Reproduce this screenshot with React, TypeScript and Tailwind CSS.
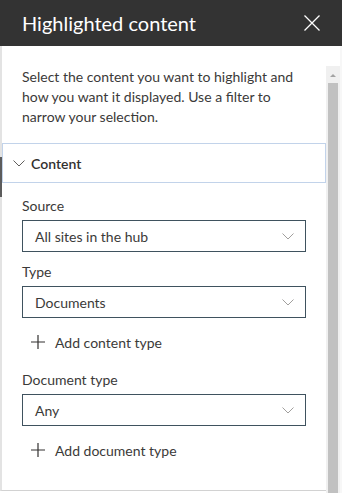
import React from "react";

const font = { fontFamily: '"Segoe UI", Lato, "Noto Sans", sans-serif' };

function Chevron({ className }: { className?: string }) {
  return (
    <svg viewBox="0 0 12 7" className={className} fill="none" stroke="currentColor" strokeWidth="1">
      <path d="M0.5 0.5 L6 6 L11.5 0.5" />
    </svg>
  );
}

function Plus() {
  return (
    <svg viewBox="0 0 14 14" className="w-[14px] h-[14px] text-[#323130]" fill="none" stroke="currentColor" strokeWidth="1.2">
      <path d="M7 0 V14 M0 7 H14" />
    </svg>
  );
}

function Dropdown({ value }: { value: string }) {
  return (
    <div className="h-[32px] border border-[#3f525e] flex items-center justify-between pl-[12px] pr-[11px]">
      <span className="text-[14px] text-[#3b3a39]">{value}</span>
      <Chevron className="w-[12px] h-[7px] text-[#a19f9d]" />
    </div>
  );
}

function AddLink({ label }: { label: string }) {
  return (
    <div className="h-[40px] flex items-center gap-[10px] pl-[9px] mt-[4px]">
      <Plus />
      <span className="text-[14px] text-[#3b3a39]">{label}</span>
    </div>
  );
}

export default function App() {
  return (
    <div className="w-[342px] h-[493px] bg-white overflow-hidden flex flex-col" style={font}>
      {/* Header */}
      <div className="h-[46px] bg-[#333333] flex items-center justify-between pl-[22px] pr-[22px] shrink-0">
        <span className="text-[20px] text-white leading-none">Highlighted content</span>
        <svg viewBox="0 0 16 16" className="w-[16px] h-[16px] text-white" fill="none" stroke="currentColor" strokeWidth="1.3">
          <path d="M0.5 0.5 L15.5 15.5 M15.5 0.5 L0.5 15.5" />
        </svg>
      </div>

      <div className="flex flex-1 min-h-0">
        {/* Panel body */}
        <div className="w-[326px] border-l-2 border-b border-l-[#e3e3e3] border-b-[#d2d2d2] mb-[2px] relative">
          <div className="absolute left-[-2px] top-[111px] w-[2px] h-[40px] bg-[#5c5c5c]" />
          <p className="pt-[21px] pl-[20px] pr-[20px] text-[14px] leading-[20px] text-[#3b3a39]">
            Select the content you want to highlight and how you want it displayed. Use a filter to narrow your selection.
          </p>

          <div className="mt-[16px] h-[40px] border border-[#c2d3ea] flex items-center pl-[10px]">
            <Chevron className="w-[12px] h-[7px] text-[#605e5c]" />
            <span className="ml-[6px] text-[14px] font-semibold text-[#323130]">Content</span>
          </div>

          <div className="pl-[20px] pr-[20px]">
            <div className="mt-[13px] text-[14px] leading-[20px] text-[#3b3a39]">Source</div>
            <div className="mt-[4px]">
              <Dropdown value="All sites in the hub" />
            </div>

            <div className="mt-[10px] text-[14px] leading-[20px] text-[#3b3a39]">Type</div>
            <div className="mt-[4px]">
              <Dropdown value="Documents" />
            </div>
            <AddLink label="Add content type" />

            <div className="mt-[8px] text-[14px] leading-[20px] text-[#3b3a39]">Document type</div>
            <div className="mt-[4px]">
              <Dropdown value="Any" />
            </div>
            <AddLink label="Add document type" />
          </div>
        </div>

        {/* Scrollbar */}
        <div className="w-[14px] mt-[20px] bg-[#f0f0f0] flex flex-col items-center pt-[8px]">
          <div className="w-0 h-0 border-l-[3px] border-r-[3px] border-b-[3px] border-l-transparent border-r-transparent border-b-[#a3a3a3]" />
          <div className="w-[10px] flex-1 mt-[6px] bg-[#c1c1c1]" />
        </div>
        <div className="w-[2px] bg-[#f7f7f7]" />
      </div>
    </div>
  );
}
